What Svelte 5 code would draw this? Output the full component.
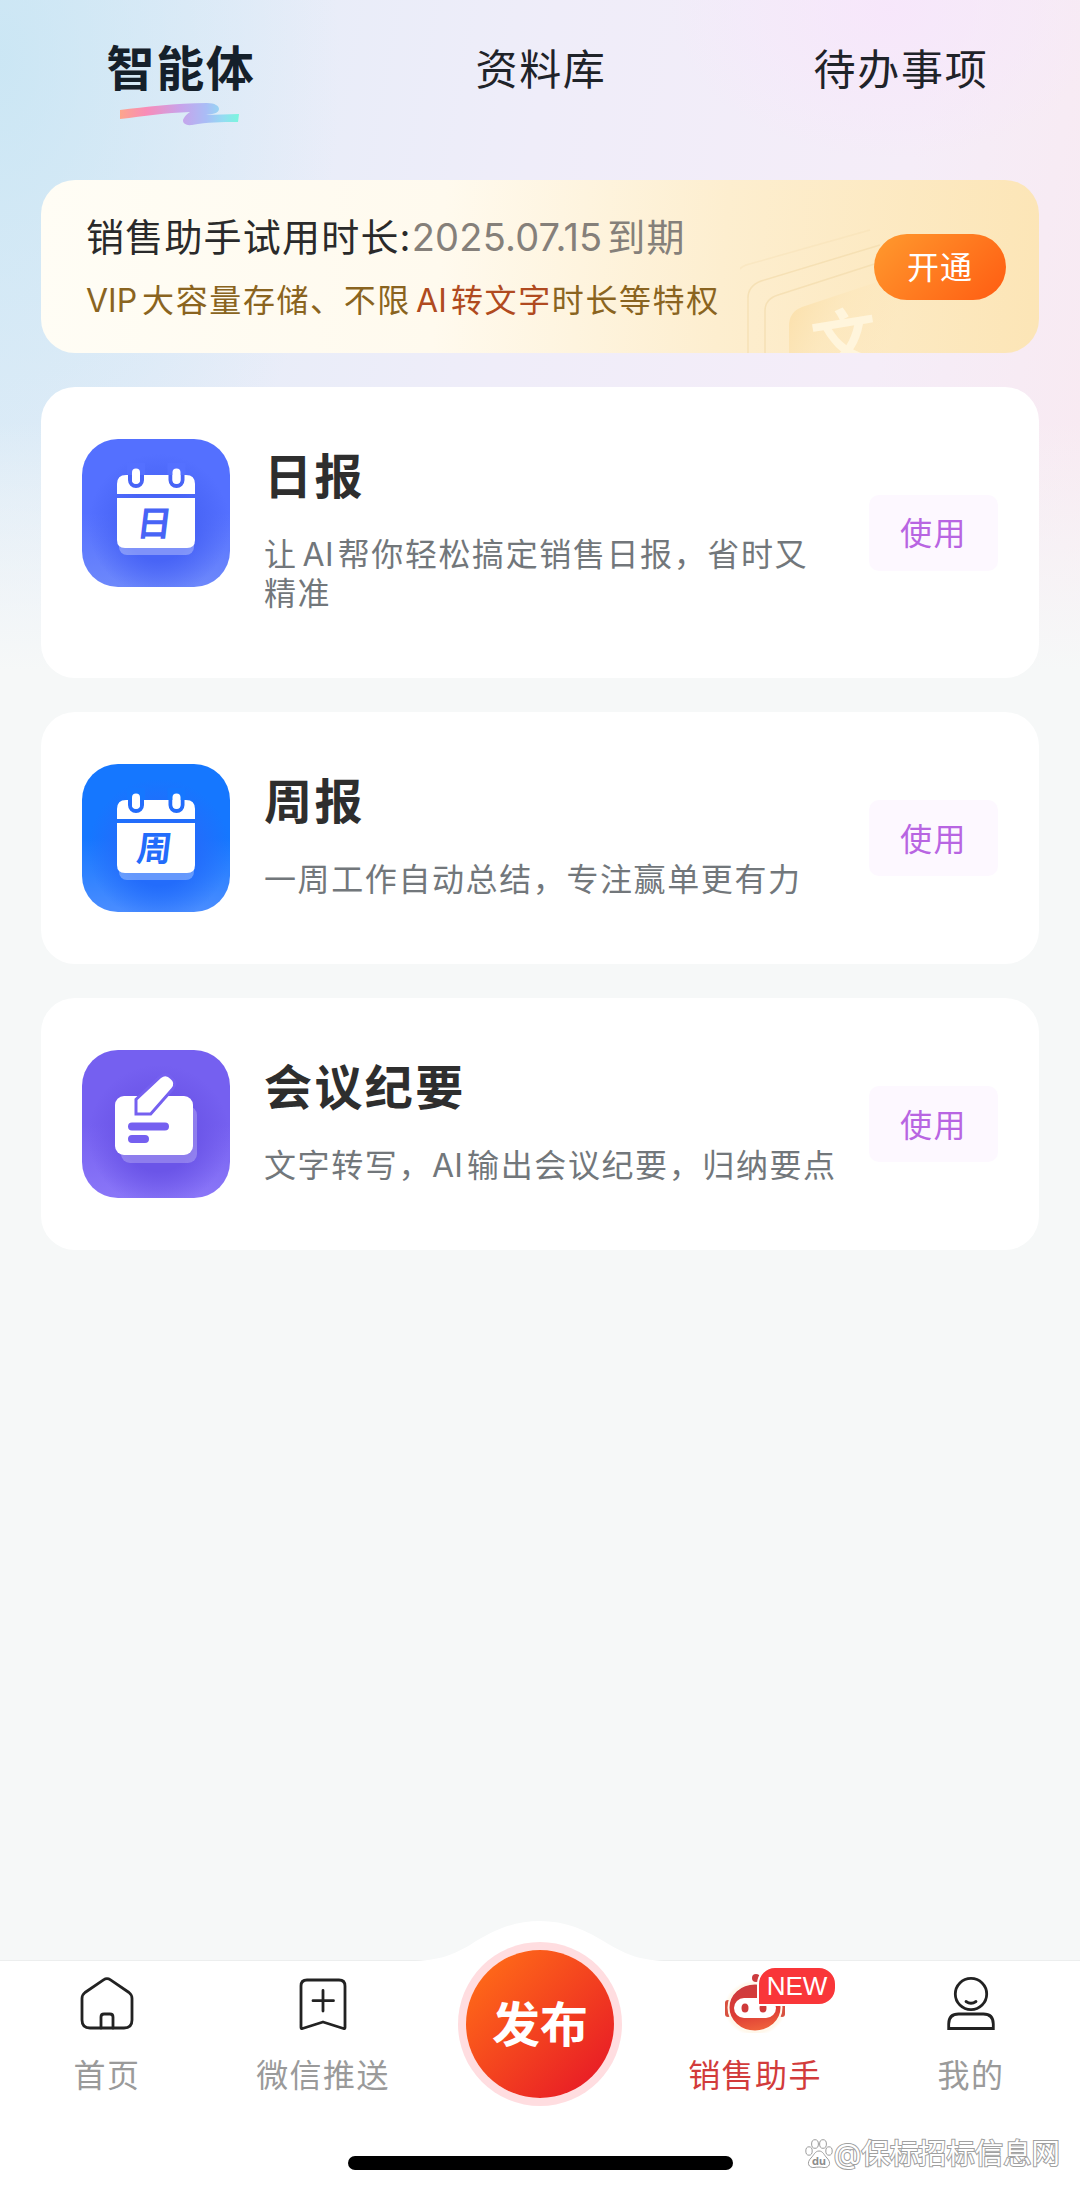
<script>
    const tabs = ["智能体", "资料库", "待办事项"];
    let activeTab = $state("智能体");

    const assistants = [
        {
            name: "日报",
            kind: "calendar",
            mark: "日",
            before: "让",
            latin: "AI",
            after: "帮你轻松搞定销售日报，省时又精准",
            top: "#5470ff",
            middle: "#4864f6",
            bottom: "#6d88fb",
        },
        {
            name: "周报",
            kind: "calendar",
            mark: "周",
            before: "一周工作自动总结，专注赢单更有力",
            latin: "",
            after: "",
            top: "#1577ff",
            middle: "#236cfb",
            bottom: "#4a8dff",
        },
        {
            name: "会议纪要",
            kind: "note",
            mark: "",
            before: "文字转写，",
            latin: "AI",
            after: "输出会议纪要，归纳要点",
            top: "#7560f0",
            middle: "#6b55e8",
            bottom: "#8a76f8",
        },
    ];
</script>

<div class="page">
    <nav class="tabs">
        {#each tabs as tab}
            <button
                class="tab"
                class:active={tab === activeTab}
                onclick={() => (activeTab = tab)}>
                {tab}
                {#if tab === activeTab}
                    <svg class="swoosh" viewBox="0 0 120 26" width="120" height="26">
                        <defs>
                            <linearGradient id="swoosh" x1="0" y1="0" x2="120" y2="0" gradientUnits="userSpaceOnUse">
                                <stop offset="0" stop-color="#fda58c" />
                                <stop offset="0.22" stop-color="#f88cb8" />
                                <stop offset="0.5" stop-color="#c9a2ea" />
                                <stop offset="0.72" stop-color="#a9bdf6" />
                                <stop offset="0.86" stop-color="#93dcf2" />
                                <stop offset="1" stop-color="#78f8dc" />
                            </linearGradient>
                        </defs>
                        <path
                            fill="url(#swoosh)"
                            d="M0 8C25 5 55 1 87 1c8 0 12 3 12 6 0 4-6 5-13 6 10 0 22-1 33-1l-1 8C100 20 88 20 72 23c-7 1-11-3-8-7 1-2 3-4 6-6C45 11 25 14 0 17z" />
                    </svg>
                {/if}
            </button>
        {/each}
    </nav>

    <main>
        <section class="banner">
            <svg class="cards" viewBox="0 0 300 173" width="300" height="173">
                <defs>
                    <linearGradient id="leaf" x1="0" y1="0" x2="1" y2="0.3">
                        <stop offset="0" stop-color="#fbdda4" />
                        <stop offset="0.5" stop-color="#fce6b9" stop-opacity="0.6" />
                        <stop offset="1" stop-color="#fce6b9" stop-opacity="0" />
                    </linearGradient>
                </defs>
                <g fill="none" stroke="#f3dcae" stroke-width="1.5">
                    <path d="M-6 173V103q0-13 12-18L130 50" opacity="0.35" />
                    <path d="M8 173V118q0-12 13-17L140 65" opacity="0.75" />
                    <path d="M25 173V131q0-12 13-16L150 79" opacity="0.75" />
                </g>
                <path fill="url(#leaf)" d="M49 173V146q0-14 13-19L170 91V173z" />
                <text x="72" y="184" font-size="66" transform="rotate(-9 106 160)">文</text>
            </svg>
            <div class="banner-text">
                <p class="trial">销售助手试用时长:<span class="until"><span class="date">2025.07.15</span>到期</span></p>
                <p class="perks"><span class="vip">VIP</span>大容量存储、不限<em><span class="ai spaced">AI</span>转文字</em>时长等特权</p>
            </div>
            <button class="open">开通</button>
        </section>

        {#each assistants as item, i}
            <section class="card">
                <svg class="icon" viewBox="0 0 148 148" width="148" height="148">
                    <defs>
                        <linearGradient id="bg{i}" x1="0" y1="0" x2="0" y2="1">
                            <stop offset="0" stop-color={item.top} />
                            <stop offset="0.5" stop-color={item.top} />
                            <stop offset="1" stop-color={item.bottom} />
                        </linearGradient>
                        <radialGradient id="glow{i}" cx="0.52" cy="0.58" r="0.48">
                            <stop offset="0.5" stop-color={item.middle} />
                            <stop offset="1" stop-color={item.middle} stop-opacity="0" />
                        </radialGradient>
                    </defs>
                    <rect width="148" height="148" rx="36" fill="url(#bg{i})" />
                    <rect width="148" height="148" rx="36" fill="url(#glow{i})" />
                    {#if item.kind === "calendar"}
                        <rect x="37" y="60" width="75" height="56" rx="8" fill="#fff" opacity="0.3" />
                        <path fill="#fff" d="M35 55V45q0-9 9-9h60q9 0 9 9V55z" />
                        <path fill="#fff" d="M35 59H113V101q0 8-8 8H43q-8 0-8-8z" />
                        <g fill="#fff" stroke={item.middle} stroke-width="4">
                            <rect x="48" y="27" width="12" height="20" rx="6" />
                            <rect x="88.5" y="27" width="12" height="20" rx="6" />
                        </g>
                        <path fill={item.top} d="M45 24h18v12H45zM85.5 24h18v12h-18z" />
                        <rect x="50" y="29.5" width="8" height="15" rx="4" fill="#fff" />
                        <rect x="90.5" y="29.5" width="8" height="15" rx="4" fill="#fff" />
                        <text
                            class="mark"
                            x="74"
                            y="97"
                            font-size="35"
                            text-anchor="middle"
                            fill={item.middle}
                            transform="translate(9 0) skewX(-7)">{item.mark}</text>
                    {:else}
                        <rect x="39" y="56" width="76" height="57" rx="9" fill="#fff" opacity="0.24" />
                        <rect x="33" y="46" width="78" height="59" rx="9" fill="#fff" />
                        <path
                            fill="#fff"
                            stroke={item.top}
                            stroke-width="6"
                            paint-order="stroke"
                            d="M55.5 62.5V50L79 28q5-4 9.5 1 5 4 1 9L68 62.5z" />
                        <path d="M50 76.5H83M50 89H63" stroke={item.top} stroke-width="8" stroke-linecap="round" />
                    {/if}
                </svg>
                <div class="info">
                    <h2>{item.name}</h2>
                    <p>{item.before}{#if item.latin}<span class="ai" class:spaced={!item.before.endsWith("，")}>{item.latin}</span>{/if}{item.after}</p>
                </div>
                <button class="use">使用</button>
            </section>
        {/each}
    </main>

    <footer>
        <svg class="bump" viewBox="0 0 260 42" width="260" height="42">
            <path fill="#fff" d="M0 41C30 41 44 34 60 25C85 9 105 1 130 1s45 8 70 24c16 9 30 16 60 16v1H0z" />
        </svg>
        <div class="menu">
            <a class="entry" href="#home">
                <svg viewBox="0 0 60 60" width="60" height="60" class="line">
                    <path d="M26.5 6.8q3.5-2.3 7 0L52 19.5q3 2.3 3 6V47q0 8-8 8H13q-8 0-8-8V25.5q0-3.7 3-6z" />
                    <path d="M24 55V44q0-3 3-3h6q3 0 3 3V55" />
                </svg>
                首页
            </a>
            <a class="entry" href="#push">
                <svg viewBox="0 0 60 60" width="60" height="60" class="line">
                    <path d="M8 54.5V13q0-6 6-6H46q6 0 6 6V54.5Q52 56 50.5 55.5L30 49 9.5 55.5Q8 56 8 54.5z" />
                    <path d="M30 17.5V38M20 27.7H40.5" />
                </svg>
                微信推送
            </a>
            <a class="publish" href="#publish">发布</a>
            <a class="entry current" href="#assistant">
                <span class="robot">
                    <svg viewBox="0 0 60 60" width="60" height="60">
                        <defs>
                            <linearGradient id="head" x1="0.3" y1="0" x2="0.5" y2="1">
                                <stop offset="0" stop-color="#cc3b3f" />
                                <stop offset="0.6" stop-color="#dc3b35" />
                                <stop offset="1" stop-color="#f0633c" />
                            </linearGradient>
                            <radialGradient id="halo">
                                <stop offset="0.7" stop-color="#ffd9a0" stop-opacity="0.7" />
                                <stop offset="1" stop-color="#ffe9c4" stop-opacity="0" />
                            </radialGradient>
                        </defs>
                        <ellipse cx="30" cy="35" rx="31" ry="28" fill="url(#halo)" />
                        <rect x="0" y="27" width="6" height="17" rx="3" fill="#d7503f" />
                        <rect x="54" y="27" width="6" height="17" rx="3" fill="#d7503f" />
                        <circle cx="31" cy="5" r="4" fill="#cc3b3f" />
                        <ellipse cx="30" cy="34.5" rx="26.5" ry="24" fill="url(#head)" stroke="#fff8ec" stroke-width="2" />
                        <rect x="9" y="25" width="42" height="20" rx="10" fill="#fff" />
                        <ellipse cx="20" cy="35" rx="3.5" ry="4.5" fill="#cf3a3a" />
                        <ellipse cx="38" cy="35" rx="3.5" ry="4.5" fill="#cf3a3a" />
                    </svg>
                    <span class="new">NEW</span>
                </span>
                销售助手
            </a>
            <a class="entry" href="#mine">
                <svg viewBox="0 0 60 60" width="60" height="60" class="line">
                    <circle cx="30" cy="21" r="15.7" />
                    <path d="M25 28.5q5 3.6 10 0" />
                    <path d="M7.7 55.5V51q0-10 10-10H42.3q10 0 10 10v4.5z" stroke-linejoin="miter" />
                </svg>
                我的
            </a>
        </div>
        <div class="home-indicator"></div>
        <div class="watermark">
            <svg viewBox="0 0 28 30" width="28" height="30">
                <g fill="#fff" stroke="#9c9c9c" stroke-width="1">
                    <ellipse cx="4" cy="12" rx="3.2" ry="4.2" />
                    <ellipse cx="10" cy="5" rx="3.4" ry="4.3" />
                    <ellipse cx="18" cy="5" rx="3.4" ry="4.3" />
                    <ellipse cx="24" cy="12" rx="3.2" ry="4.2" />
                    <path d="M14 12c4 0 5 4 8 7 5 5 2 10-3 9.5-4-.6-6-.6-10 0C4 29 1 24 6 19c3-3 4-7 8-7z" />
                </g>
                <text x="14" y="26" font-size="11" font-weight="700" text-anchor="middle" fill="#8c8c8c">du</text>
            </svg>
            <span>@保标招标信息网</span>
        </div>
    </footer>
</div>

<style>
    :global(body) {
        margin: 0;
    }

    .page {
        display: flex;
        flex-direction: column;
        width: 1080px;
        height: 2192px;
        overflow: hidden;
        font-family: Inter, "Noto Sans CJK SC", sans-serif;
        background:
            linear-gradient(rgba(246, 248, 248, 0) 420px, #f6f8f8 670px),
            radial-gradient(ellipse 340px 560px at 0 60px, rgba(196, 228, 243, 0.75), rgba(222, 236, 247, 0)),
            radial-gradient(ellipse 220px 150px at 890px 10px, rgba(247, 230, 251, 0.9), rgba(247, 232, 251, 0)),
            linear-gradient(100deg, #e0edf8 0%, #efedf9 38%, #f5edf8 64%, #f9e9f0 84%, #fbeaea 100%);
        background-color: #f6f8f8;
    }

    button {
        padding: 0;
        border: none;
        background: none;
        font-family: inherit;
        cursor: pointer;
    }

    h2,
    p {
        margin: 0;
    }

    .tabs {
        display: flex;
        height: 180px;
    }

    .tab {
        position: relative;
        flex: 1;
        height: 132px;
        padding-left: 2px;
        font-size: 42px;
        letter-spacing: 1.7px;
        color: #1f2329;
    }

    .tab.active {
        height: 130px;
        font-size: 48px;
        font-weight: 700;
        color: #15202a;
    }

    .swoosh {
        position: absolute;
        left: 120px;
        top: 102px;
    }

    main {
        display: flex;
        flex-direction: column;
        flex: 1;
        gap: 34px;
        padding: 0 41px;
    }

    .banner {
        position: relative;
        display: flex;
        justify-content: space-between;
        align-items: center;
        height: 173px;
        padding: 0 33px 0 45px;
        border-radius: 34px;
        overflow: hidden;
        box-sizing: border-box;
        background: linear-gradient(95deg, #fffdf5 0%, #fffaee 40%, #fdeecf 68%, #fce5b6 100%);
    }

    .cards {
        position: absolute;
        left: 699px;
        top: 0;
        fill: #fff5dc;
        font-weight: 700;
    }

    .banner-text {
        position: relative;
        padding-top: 4px;
        white-space: nowrap;
    }

    .trial {
        font-size: 38px;
        line-height: 60px;
        letter-spacing: 1.2px;
        color: #2a2a2a;
    }

    .until {
        color: #85807a;
    }

    .date {
        margin-right: 5px;
        letter-spacing: 0.2px;
    }

    .perks {
        margin-top: 4px;
        font-size: 32px;
        line-height: 60px;
        letter-spacing: 1.6px;
        color: #8a6420;
    }

    .perks em {
        font-style: normal;
        color: #b04a20;
    }

    .vip {
        margin-right: 5px;
        letter-spacing: 0;
    }

    .ai {
        margin-right: 4px;
        letter-spacing: 0.2px;
    }

    .ai.spaced {
        margin-left: 5px;
    }

    .open {
        position: relative;
        width: 132px;
        height: 66px;
        padding-bottom: 3px;
        border-radius: 33px;
        font-size: 32px;
        letter-spacing: 1px;
        color: #fff;
        background: linear-gradient(135deg, #ff9a2e, #ff5c12);
    }

    .card {
        display: flex;
        align-items: center;
        padding: 0 41px;
        border-radius: 34px;
        background: #fff;
    }

    .icon {
        flex-shrink: 0;
        align-self: flex-start;
        margin-top: 52px;
    }

    .mark {
        font-weight: 700;
    }

    .info {
        flex: 1;
        padding: 61px 0 65px 34px;
    }

    h2 {
        font-size: 48px;
        line-height: 58px;
        font-weight: 700;
        letter-spacing: 2.4px;
        color: #2e2e2e;
    }

    .info p {
        width: 576px;
        margin-top: 29px;
        font-size: 32px;
        line-height: 39px;
        letter-spacing: 1.6px;
        color: #72777b;
    }

    .use {
        flex-shrink: 0;
        width: 129px;
        height: 76px;
        padding-bottom: 3px;
        border-radius: 10px;
        font-size: 32px;
        letter-spacing: 1.4px;
        color: #b865e2;
        background: #fdf8ff;
    }

    footer {
        position: relative;
        height: 231px;
        background: #fff;
        box-shadow: 0 -1px 0 #eceeee;
    }

    .bump {
        position: absolute;
        left: 410px;
        top: -41px;
    }

    .menu {
        display: flex;
        align-items: flex-start;
        height: 150px;
    }

    .entry {
        display: flex;
        flex: 1;
        flex-direction: column;
        align-items: center;
        padding: 12px 2px 0 0;
        font-size: 32px;
        line-height: 62px;
        letter-spacing: 1.4px;
        text-decoration: none;
        color: #9a9a9a;
    }

    .entry > svg,
    .robot {
        flex-shrink: 0;
        margin-bottom: 12px;
    }

    .current {
        color: #d23b3b;
    }

    .line {
        fill: none;
        stroke: #222;
        stroke-width: 2.8;
        stroke-linecap: round;
        stroke-linejoin: round;
    }

    .publish {
        position: relative;
        display: flex;
        align-items: center;
        justify-content: center;
        width: 148px;
        height: 148px;
        margin: -11px 34px 0;
        padding-bottom: 6px;
        box-sizing: border-box;
        border-radius: 50%;
        font-size: 48px;
        font-weight: 700;
        text-decoration: none;
        color: #fff;
        background: linear-gradient(135deg, #ff6a18 10%, #e81c26 90%);
        box-shadow: 0 0 0 8px #ffdde0;
    }

    .robot {
        position: relative;
        height: 60px;
    }

    .new {
        position: absolute;
        left: 32px;
        top: -7px;
        width: 76px;
        height: 36px;
        border: 2px solid #fff;
        border-radius: 18px 18px 18px 2px;
        font-family: "Liberation Sans", sans-serif;
        font-size: 26px;
        line-height: 37px;
        letter-spacing: 0;
        text-align: center;
        color: #fff;
        background: #f93639;
    }

    .home-indicator {
        position: absolute;
        left: 348px;
        top: 195px;
        width: 385px;
        height: 14px;
        border-radius: 7px;
        background: #000;
    }

    .watermark {
        position: absolute;
        right: 20px;
        top: 173px;
        display: flex;
        align-items: center;
        gap: 1px;
        font-size: 28.4px;
        line-height: 40px;
        white-space: nowrap;
        color: #fff;
    }

    .watermark span {
        paint-order: stroke;
        -webkit-text-stroke: 2px #a0a0a0;
    }
</style>
